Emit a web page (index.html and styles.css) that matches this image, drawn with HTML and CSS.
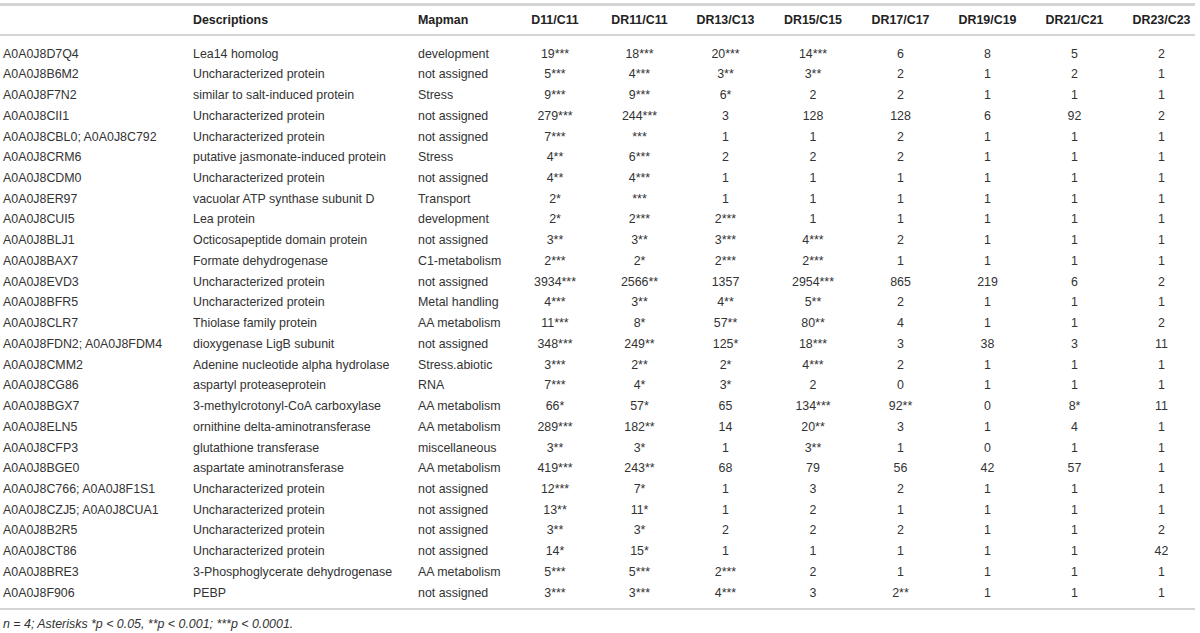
FILE: index.html
```html
<!DOCTYPE html>
<html lang="en">
<head>
<meta charset="utf-8">
<title>Table</title>
<link rel="stylesheet" href="styles.css">
</head>
<body>
<div class="page">
<table class="data">
<colgroup>
<col class="c-id"><col class="c-desc"><col class="c-map"><col class="c-d11"><col class="c-dr11"><col class="c-dr13"><col class="c-dr15"><col class="c-dr17"><col class="c-dr19"><col class="c-dr21"><col class="c-dr23">
</colgroup>
<thead>
<tr><th class="left"></th><th class="left">Descriptions</th><th class="left">Mapman</th><th>D11/C11</th><th>DR11/C11</th><th>DR13/C13</th><th>DR15/C15</th><th>DR17/C17</th><th>DR19/C19</th><th>DR21/C21</th><th class="last">DR23/C23</th></tr>
</thead>
<tbody>
<tr><td class="left id">A0A0J8D7Q4</td><td class="left">Lea14 homolog</td><td class="left">development</td><td>19***</td><td>18***</td><td>20***</td><td>14***</td><td>6</td><td>8</td><td>5</td><td class="last">2</td></tr>
<tr><td class="left id">A0A0J8B6M2</td><td class="left">Uncharacterized protein</td><td class="left">not assigned</td><td>5***</td><td>4***</td><td>3**</td><td>3**</td><td>2</td><td>1</td><td>2</td><td class="last">1</td></tr>
<tr><td class="left id">A0A0J8F7N2</td><td class="left">similar to salt-induced protein</td><td class="left">Stress</td><td>9***</td><td>9***</td><td>6*</td><td>2</td><td>2</td><td>1</td><td>1</td><td class="last">1</td></tr>
<tr><td class="left id">A0A0J8CII1</td><td class="left">Uncharacterized protein</td><td class="left">not assigned</td><td>279***</td><td>244***</td><td>3</td><td>128</td><td>128</td><td>6</td><td>92</td><td class="last">2</td></tr>
<tr><td class="left id">A0A0J8CBL0; A0A0J8C792</td><td class="left">Uncharacterized protein</td><td class="left">not assigned</td><td>7***</td><td>***</td><td>1</td><td>1</td><td>2</td><td>1</td><td>1</td><td class="last">1</td></tr>
<tr><td class="left id">A0A0J8CRM6</td><td class="left">putative jasmonate-induced protein</td><td class="left">Stress</td><td>4**</td><td>6***</td><td>2</td><td>2</td><td>2</td><td>1</td><td>1</td><td class="last">1</td></tr>
<tr><td class="left id">A0A0J8CDM0</td><td class="left">Uncharacterized protein</td><td class="left">not assigned</td><td>4**</td><td>4***</td><td>1</td><td>1</td><td>1</td><td>1</td><td>1</td><td class="last">1</td></tr>
<tr><td class="left id">A0A0J8ER97</td><td class="left">vacuolar ATP synthase subunit D</td><td class="left">Transport</td><td>2*</td><td>***</td><td>1</td><td>1</td><td>1</td><td>1</td><td>1</td><td class="last">1</td></tr>
<tr><td class="left id">A0A0J8CUI5</td><td class="left">Lea protein</td><td class="left">development</td><td>2*</td><td>2***</td><td>2***</td><td>1</td><td>1</td><td>1</td><td>1</td><td class="last">1</td></tr>
<tr><td class="left id">A0A0J8BLJ1</td><td class="left">Octicosapeptide domain protein</td><td class="left">not assigned</td><td>3**</td><td>3**</td><td>3***</td><td>4***</td><td>2</td><td>1</td><td>1</td><td class="last">1</td></tr>
<tr><td class="left id">A0A0J8BAX7</td><td class="left">Formate dehydrogenase</td><td class="left">C1-metabolism</td><td>2***</td><td>2*</td><td>2***</td><td>2***</td><td>1</td><td>1</td><td>1</td><td class="last">1</td></tr>
<tr><td class="left id">A0A0J8EVD3</td><td class="left">Uncharacterized protein</td><td class="left">not assigned</td><td>3934***</td><td>2566**</td><td>1357</td><td>2954***</td><td>865</td><td>219</td><td>6</td><td class="last">2</td></tr>
<tr><td class="left id">A0A0J8BFR5</td><td class="left">Uncharacterized protein</td><td class="left">Metal handling</td><td>4***</td><td>3**</td><td>4**</td><td>5**</td><td>2</td><td>1</td><td>1</td><td class="last">1</td></tr>
<tr><td class="left id">A0A0J8CLR7</td><td class="left">Thiolase family protein</td><td class="left">AA metabolism</td><td>11***</td><td>8*</td><td>57**</td><td>80**</td><td>4</td><td>1</td><td>1</td><td class="last">2</td></tr>
<tr><td class="left id">A0A0J8FDN2; A0A0J8FDM4</td><td class="left">dioxygenase LigB subunit</td><td class="left">not assigned</td><td>348***</td><td>249**</td><td>125*</td><td>18***</td><td>3</td><td>38</td><td>3</td><td class="last">11</td></tr>
<tr><td class="left id">A0A0J8CMM2</td><td class="left">Adenine nucleotide alpha hydrolase</td><td class="left">Stress.abiotic</td><td>3***</td><td>2**</td><td>2*</td><td>4***</td><td>2</td><td>1</td><td>1</td><td class="last">1</td></tr>
<tr><td class="left id">A0A0J8CG86</td><td class="left">aspartyl proteaseprotein</td><td class="left">RNA</td><td>7***</td><td>4*</td><td>3*</td><td>2</td><td>0</td><td>1</td><td>1</td><td class="last">1</td></tr>
<tr><td class="left id">A0A0J8BGX7</td><td class="left">3-methylcrotonyl-CoA carboxylase</td><td class="left">AA metabolism</td><td>66*</td><td>57*</td><td>65</td><td>134***</td><td>92**</td><td>0</td><td>8*</td><td class="last">11</td></tr>
<tr><td class="left id">A0A0J8ELN5</td><td class="left">ornithine delta-aminotransferase</td><td class="left">AA metabolism</td><td>289***</td><td>182**</td><td>14</td><td>20**</td><td>3</td><td>1</td><td>4</td><td class="last">1</td></tr>
<tr><td class="left id">A0A0J8CFP3</td><td class="left">glutathione transferase</td><td class="left">miscellaneous</td><td>3**</td><td>3*</td><td>1</td><td>3**</td><td>1</td><td>0</td><td>1</td><td class="last">1</td></tr>
<tr><td class="left id">A0A0J8BGE0</td><td class="left">aspartate aminotransferase</td><td class="left">AA metabolism</td><td>419***</td><td>243**</td><td>68</td><td>79</td><td>56</td><td>42</td><td>57</td><td class="last">1</td></tr>
<tr><td class="left id">A0A0J8C766; A0A0J8F1S1</td><td class="left">Uncharacterized protein</td><td class="left">not assigned</td><td>12***</td><td>7*</td><td>1</td><td>3</td><td>2</td><td>1</td><td>1</td><td class="last">1</td></tr>
<tr><td class="left id">A0A0J8CZJ5; A0A0J8CUA1</td><td class="left">Uncharacterized protein</td><td class="left">not assigned</td><td>13**</td><td>11*</td><td>1</td><td>2</td><td>1</td><td>1</td><td>1</td><td class="last">1</td></tr>
<tr><td class="left id">A0A0J8B2R5</td><td class="left">Uncharacterized protein</td><td class="left">not assigned</td><td>3**</td><td>3*</td><td>2</td><td>2</td><td>2</td><td>1</td><td>1</td><td class="last">2</td></tr>
<tr><td class="left id">A0A0J8CT86</td><td class="left">Uncharacterized protein</td><td class="left">not assigned</td><td>14*</td><td>15*</td><td>1</td><td>1</td><td>1</td><td>1</td><td>1</td><td class="last">42</td></tr>
<tr><td class="left id">A0A0J8BRE3</td><td class="left">3-Phosphoglycerate dehydrogenase</td><td class="left">AA metabolism</td><td>5***</td><td>5***</td><td>2***</td><td>2</td><td>1</td><td>1</td><td>1</td><td class="last">1</td></tr>
<tr><td class="left id">A0A0J8F906</td><td class="left">PEBP</td><td class="left">not assigned</td><td>3***</td><td>3***</td><td>4***</td><td>3</td><td>2**</td><td>1</td><td>1</td><td class="last">1</td></tr>
</tbody>
</table>
<p class="note">n = 4; Asterisks *p &lt; 0.05, **p &lt; 0.001; ***p &lt; 0.0001.</p>
</div>
</body>
</html>
```

FILE: styles.css
```css
html, body {
  margin: 0;
  padding: 0;
  background: #ffffff;
}

.page {
  padding-top: 3px;
  font-family: "Liberation Sans", Arial, sans-serif;
  font-size: 12.4px;
  color: #333333;
}

.data {
  width: 1195px;
  table-layout: fixed;
  border-collapse: collapse;
  border-top: 3px solid #d4d4d4;
  border-bottom: 2px solid #d4d4d4;
}

.c-id { width: 193px; }
.c-desc { width: 225px; }
.c-map { width: 95px; }
.c-d11 { width: 84px; }
.c-dr11 { width: 85px; }
.c-dr13 { width: 87px; }
.c-dr15 { width: 88px; }
.c-dr17 { width: 87px; }
.c-dr19 { width: 87px; }
.c-dr21 { width: 87px; }
.c-dr23 { width: 77px; }

.data th {
  height: 28px;
  padding: 0;
  font-weight: bold;
  color: #222222;
  text-align: center;
  white-space: nowrap;
  border-bottom: 2px solid #d4d4d4;
}

.data td {
  padding: 0;
  height: 20.73px;
  line-height: 20.73px;
  text-align: center;
  white-space: nowrap;
}

.data tbody tr:first-child td {
  padding-top: 7.6px;
}

.data tbody tr:last-child td {
  padding-bottom: 4.6px;
}

.data .left {
  text-align: left;
}

.data .id {
  padding-left: 3px;
}

.data .last {
  padding-left: 10px;
}

.note {
  margin: 7px 0 0 3px;
  line-height: 15px;
  font-style: italic;
  color: #333333;
}
```
